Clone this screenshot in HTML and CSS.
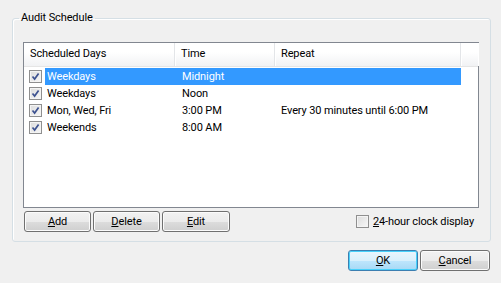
FILE: index.html
```html
<!DOCTYPE html>
<html>
<head>
<link rel="stylesheet" href="styles.css">
</head>
<body>
	<div class="dialog">
		<fieldset class="group">
			<legend>Audit Schedule</legend>
			<div class="list">
				<div class="list-head">
					<div class="hcol c1">Scheduled Days</div>
					<div class="hcol c2">Time</div>
					<div class="hcol c3">Repeat</div>
					<div class="hcol c4"></div>
				</div>
				<div class="rows">
					<div class="row selected">
						<div class="cell c1">
							<span class="check"><svg viewBox="0 0 9 9"><path d="M1.5 4.5 L3.6 7 L7.6 1.5"/></svg></span>
							<span class="label">Weekdays</span>
						</div>
						<div class="cell c2">Midnight</div>
						<div class="cell c3"></div>
					</div>
					<div class="row">
						<div class="cell c1">
							<span class="check"><svg viewBox="0 0 9 9"><path d="M1.5 4.5 L3.6 7 L7.6 1.5"/></svg></span>
							<span class="label">Weekdays</span>
						</div>
						<div class="cell c2">Noon</div>
						<div class="cell c3"></div>
					</div>
					<div class="row">
						<div class="cell c1">
							<span class="check"><svg viewBox="0 0 9 9"><path d="M1.5 4.5 L3.6 7 L7.6 1.5"/></svg></span>
							<span class="label">Mon, Wed, Fri</span>
						</div>
						<div class="cell c2">3:00 PM</div>
						<div class="cell c3">Every 30 minutes until 6:00 PM</div>
					</div>
					<div class="row">
						<div class="cell c1">
							<span class="check"><svg viewBox="0 0 9 9"><path d="M1.5 4.5 L3.6 7 L7.6 1.5"/></svg></span>
							<span class="label">Weekends</span>
						</div>
						<div class="cell c2">8:00 AM</div>
						<div class="cell c3"></div>
					</div>
				</div>
			</div>
			<div class="group-foot">
				<div class="buttons">
					<button class="btn"><u>A</u>dd</button>
					<button class="btn"><u>D</u>elete</button>
					<button class="btn wide"><u>E</u>dit</button>
				</div>
				<label class="option"><span class="check"></span><span><u>2</u>4-hour clock display</span></label>
			</div>
		</fieldset>
		<div class="actions">
			<button class="btn default"><u>O</u>K</button>
			<button class="btn"><u>C</u>ancel</button>
		</div>
	</div>
</body>
</html>
```

FILE: styles.css
```css
body{
	margin: 0;
	background: #f0f0f0;
	font-family: "Roboto", "Liberation Sans", sans-serif;
	font-size: 11px;
	letter-spacing: -0.12px;
	color: #000;
}
.dialog{
	width: 501px;
	height: 283px;
	padding: 11px 10px 0 12px;
	box-sizing: border-box;
}
.group{
	margin: 0;
	padding: 17px 11px 9px 10px;
	border: 1px solid #d5dfe5;
	border-radius: 3px;
	box-shadow: inset 1px 1px 0 #fff;
}
.group>legend{
	margin-left: -4px;
	padding: 0 2px;
	line-height: 14px;
}
.list{
	height: 166px;
	box-sizing: border-box;
	border: 1px solid #828790;
	background: #fff;
}
.list-head{
	display: flex;
	height: 23px;
	border-bottom: 1px solid #e5e5e5;
	background: linear-gradient(#ffffff, #ffffff 40%, #f1f2f4);
}
.hcol{
	box-sizing: border-box;
	line-height: 22px;
	padding-left: 6px;
	border-right: 1px solid #e3e5e8;
	box-shadow: 1px 0 0 #fff;
}
.c1{
	width: 151px;
}
.c2{
	width: 100px;
}
.c3{
	width: 186px;
}
.c4{
	flex: 1;
	border-right: none;
}
.rows{
	padding-top: 1px;
}
.row{
	display: flex;
	height: 17px;
	line-height: 17px;
}
.cell{
	box-sizing: border-box;
	padding-left: 6px;
	white-space: nowrap;
}
.cell.c1{
	display: flex;
	align-items: center;
	padding-left: 5px;
}
.cell.c1 .label{
	flex: 1;
	margin-left: 3px;
	padding-left: 2px;
}
.cell.c2{
	padding-left: 7px;
}
.row.selected .label,
.row.selected .c2,
.row.selected .c3{
	background: #3399ff;
	color: #fff;
}
.check{
	display: flex;
	align-items: center;
	justify-content: center;
	width: 13px;
	height: 13px;
	box-sizing: border-box;
	border: 1px solid #8f8f8f;
	background: linear-gradient(135deg, #dcdcdc, #f7f7f7);
	box-shadow: inset 0 0 0 1px #f4f4f4;
}
.check svg{
	width: 9px;
	height: 9px;
}
.check path{
	fill: none;
	stroke: #3d5290;
	stroke-width: 1.7;
}
.group-foot{
	display: flex;
	align-items: center;
	justify-content: space-between;
	margin-top: 3px;
}
.buttons{
	display: flex;
	gap: 2px;
	margin-left: 1px;
}
.btn{
	width: 67px;
	height: 21px;
	padding: 0;
	font-family: inherit;
	font-size: inherit;
	letter-spacing: inherit;
	color: #000;
	border: 1px solid #707070;
	border-radius: 3px;
	background: linear-gradient(#f2f2f2, #ebebeb 50%, #dddddd 50%, #cfcfcf);
	box-shadow: inset 0 0 0 1px #fbfbfb;
}
.btn.wide{
	width: 68px;
}
.option{
	display: flex;
	align-items: center;
	gap: 4px;
	margin-right: 5px;
}
.actions{
	display: flex;
	justify-content: flex-end;
	gap: 2px;
	margin-top: 8px;
	padding-right: 1px;
}
.actions .btn{
	width: 70px;
}
.btn.default{
	border-color: #3c7fb1;
	background: linear-gradient(#eaf6fd, #d9f0fc 50%, #bee6fd 50%, #a7d9f5);
	box-shadow: inset 0 0 0 1px #48d1fb;
}
```
